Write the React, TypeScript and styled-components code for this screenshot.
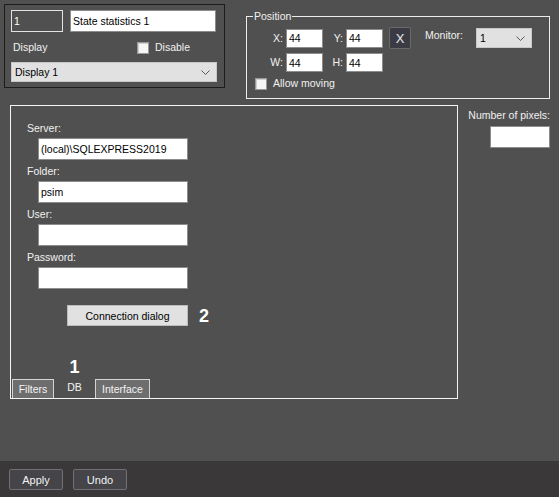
import React from "react";
import styled, { createGlobalStyle } from "styled-components";

const Global = createGlobalStyle`
  html, body { margin: 0; padding: 0; background: #505050; }
  * { box-sizing: border-box; }
  body { font-family: "Liberation Sans", Arial, sans-serif; font-size: 10.5px; color: #f2f2f2; }
`;

const Page = styled.div`
  width: 559px;
  height: 497px;
  background: #505050;
  display: flex;
  flex-direction: column;
  overflow: hidden;
`;

const TopRow = styled.div`
  display: flex;
  align-items: flex-start;
`;

const ObjectPanel = styled.div`
  margin: 4px 0 0 4px;
  width: 221px;
  height: 84px;
  border: 1px solid #1c1c1c;
  padding: 5px 0 0 6px;
  display: flex;
  flex-direction: column;
`;

const Row = styled.div<{ $gap?: number; $mt?: number }>`
  display: flex;
  align-items: center;
  gap: ${(p) => p.$gap ?? 0}px;
  margin-top: ${(p) => p.$mt ?? 0}px;
`;

const TextBox = styled.div<{ $w: number; $h?: number; $dark?: boolean }>`
  width: ${(p) => p.$w}px;
  height: ${(p) => p.$h ?? 22}px;
  background: ${(p) => (p.$dark ? "#505050" : "#ffffff")};
  border: 1px solid ${(p) => (p.$dark ? "#e4e4e4" : "#8c8c8c")};
  color: ${(p) => (p.$dark ? "#ffffff" : "#000000")};
  display: flex;
  align-items: center;
  padding-left: 2px;
  font-size: 10.5px;
  white-space: nowrap;
  overflow: hidden;
`;

const Label = styled.span<{ $w?: number; $right?: boolean }>`
  display: inline-block;
  ${(p) => (p.$w ? `width: ${p.$w}px; flex: 0 0 ${p.$w}px;` : "")}
  text-align: ${(p) => (p.$right ? "right" : "left")};
  color: #f0f0f0;
  white-space: nowrap;
  line-height: 13px;
`;

const CheckLabel = styled.label`
  display: flex;
  align-items: center;
  gap: 6px;
  color: #f0f0f0;
  line-height: 13px;
`;

const CheckBox = styled.span`
  width: 12px;
  height: 12px;
  background: #f6f6f6;
  border: 1px solid #9a9a9a;
  box-shadow: inset 1px 1px 0 #cfcfcf;
`;

const Select = styled.div<{ $w: number; $h?: number }>`
  width: ${(p) => p.$w}px;
  height: ${(p) => p.$h ?? 20}px;
  background: #e1e1e1;
  border: 1px solid #c8c8c8;
  color: #000;
  display: flex;
  align-items: center;
  justify-content: space-between;
  padding: 0 6px 0 3px;
`;

const Chevron = () => (
  <svg width="9" height="5" viewBox="0 0 9 5">
    <polyline points="0.5,0.5 4.5,4.5 8.5,0.5" fill="none" stroke="#5a5a5a" strokeWidth="1" />
  </svg>
);

const GroupBox = styled.div`
  position: relative;
  margin: 16px 0 0 21px;
  width: 304px;
  height: 83px;
  border: 1px solid #ececec;
  padding: 10px 0 0 15px;
`;

const Legend = styled.span`
  position: absolute;
  top: -7px;
  left: 6px;
  padding: 0 1px;
  background: #505050;
  color: #f0f0f0;
  line-height: 13px;
`;

const IconButton = styled.div`
  width: 22px;
  height: 22px;
  background: #3b3b45;
  border: 1px solid #6a6a6a;
  border-radius: 2px;
  color: #e8e8e8;
  font-size: 13px;
  display: flex;
  align-items: center;
  justify-content: center;
`;

const MainRow = styled.div`
  display: flex;
  align-items: flex-start;
  margin-top: 6px;
`;

const TabPanel = styled.div`
  margin-left: 10px;
  width: 448px;
  height: 294px;
  border: 1px solid #f4f4f4;
  display: flex;
  flex-direction: column;
`;

const Fields = styled.div`
  padding: 15px 0 0 16px;
  display: flex;
  flex-direction: column;
  gap: 4px;
`;

const Field = styled.div`
  display: flex;
  flex-direction: column;
  gap: 3px;
`;

const FieldLabel = styled.span`
  line-height: 14px;
  color: #f0f0f0;
`;

const FieldInput = styled(TextBox)`
  margin-left: 11px;
`;

const ButtonRow = styled.div`
  display: flex;
  align-items: center;
  gap: 11px;
  margin: 16px 0 0 56px;
`;

const LightButton = styled.div`
  width: 121px;
  height: 21px;
  background: #e1e1e1;
  border: 1px solid #bcbcbc;
  color: #000;
  display: flex;
  align-items: center;
  justify-content: center;
`;

const Marker = styled.span`
  font-size: 18px;
  font-weight: bold;
  line-height: 18px;
  color: #ffffff;
`;

const TabBar = styled.div`
  margin-top: auto;
  padding-left: 1px;
  display: flex;
  align-items: flex-end;
  height: 19px;
`;

const Tab = styled.div<{ $w: number; $active?: boolean }>`
  position: relative;
  width: ${(p) => p.$w}px;
  height: 19px;
  background: ${(p) => (p.$active ? "#505050" : "#6e6e6e")};
  border: ${(p) => (p.$active ? "none" : "1px solid #d4d4d4")};
  border-bottom: none;
  color: #f4f4f4;
  display: flex;
  align-items: center;
  justify-content: center;
  padding-bottom: ${(p) => (p.$active ? 4 : 1)}px;
`;

const TabMarker = styled(Marker)`
  position: absolute;
  bottom: calc(100% + 3px);
  left: 50%;
  transform: translateX(-50%);
`;

const SideColumn = styled.div`
  margin-left: 9px;
  width: 83px;
  padding-top: 4px;
  display: flex;
  flex-direction: column;
  align-items: flex-end;
  gap: 4px;
`;

const Footer = styled.div`
  margin-top: auto;
  height: 36px;
  background: #3a3839;
  display: flex;
  align-items: flex-start;
  gap: 10px;
  padding: 8px 0 0 9px;
`;

const DarkButton = styled.div`
  width: 54px;
  height: 21px;
  background: #444449;
  border: 1px solid #707074;
  border-radius: 2px;
  color: #f2f2f2;
  display: flex;
  align-items: center;
  justify-content: center;
  font-size: 11px;
`;

export default function App() {
  return (
    <Page>
      <Global />
      <TopRow>
        <ObjectPanel>
          <Row $gap={7}>
            <TextBox $w={52} $dark>1</TextBox>
            <TextBox $w={146}>State statistics 1</TextBox>
          </Row>
          <Row $mt={9}>
            <Label $w={126} style={{ paddingLeft: 2 }}>Display</Label>
            <CheckLabel>
              <CheckBox />
              Disable
            </CheckLabel>
          </Row>
          <Row $mt={8}>
            <Select $w={206}>
              <span>Display 1</span>
              <Chevron />
            </Select>
          </Row>
        </ObjectPanel>
        <GroupBox>
          <Legend>Position</Legend>
          <Row>
            <Label $w={21} $right>X:</Label>
            <TextBox $w={37} $h={19} style={{ marginLeft: 3 }}>44</TextBox>
            <Label $w={20} $right>Y:</Label>
            <TextBox $w={37} $h={19} style={{ marginLeft: 3 }}>44</TextBox>
            <IconButton style={{ marginLeft: 6 }}>X</IconButton>
            <Label $w={51} style={{ marginLeft: 14, alignSelf: "flex-start", marginTop: 2 }}>Monitor:</Label>
            <Select $w={56}>
              <span>1</span>
              <Chevron />
            </Select>
          </Row>
          <Row $mt={4}>
            <Label $w={21} $right>W:</Label>
            <TextBox $w={37} $h={19} style={{ marginLeft: 3 }}>44</TextBox>
            <Label $w={20} $right>H:</Label>
            <TextBox $w={37} $h={19} style={{ marginLeft: 3 }}>44</TextBox>
          </Row>
          <Row $mt={5} style={{ marginLeft: -7 }}>
            <CheckLabel>
              <CheckBox />
              Allow moving
            </CheckLabel>
          </Row>
        </GroupBox>
      </TopRow>
      <MainRow>
        <TabPanel>
          <Fields>
            <Field>
              <FieldLabel>Server:</FieldLabel>
              <FieldInput $w={150}>(local)\SQLEXPRESS2019</FieldInput>
            </Field>
            <Field>
              <FieldLabel>Folder:</FieldLabel>
              <FieldInput $w={150}>psim</FieldInput>
            </Field>
            <Field>
              <FieldLabel>User:</FieldLabel>
              <FieldInput $w={150} />
            </Field>
            <Field>
              <FieldLabel>Password:</FieldLabel>
              <FieldInput $w={150} />
            </Field>
          </Fields>
          <ButtonRow>
            <LightButton>Connection dialog</LightButton>
            <Marker>2</Marker>
          </ButtonRow>
          <TabBar>
            <Tab $w={42}>Filters</Tab>
            <Tab $w={41} $active>
              <TabMarker>1</TabMarker>
              DB
            </Tab>
            <Tab $w={55}>Interface</Tab>
          </TabBar>
        </TabPanel>
        <SideColumn>
          <Label>Number of pixels:</Label>
          <TextBox $w={60} $h={22} />
        </SideColumn>
      </MainRow>
      <Footer>
        <DarkButton>Apply</DarkButton>
        <DarkButton>Undo</DarkButton>
      </Footer>
    </Page>
  );
}
